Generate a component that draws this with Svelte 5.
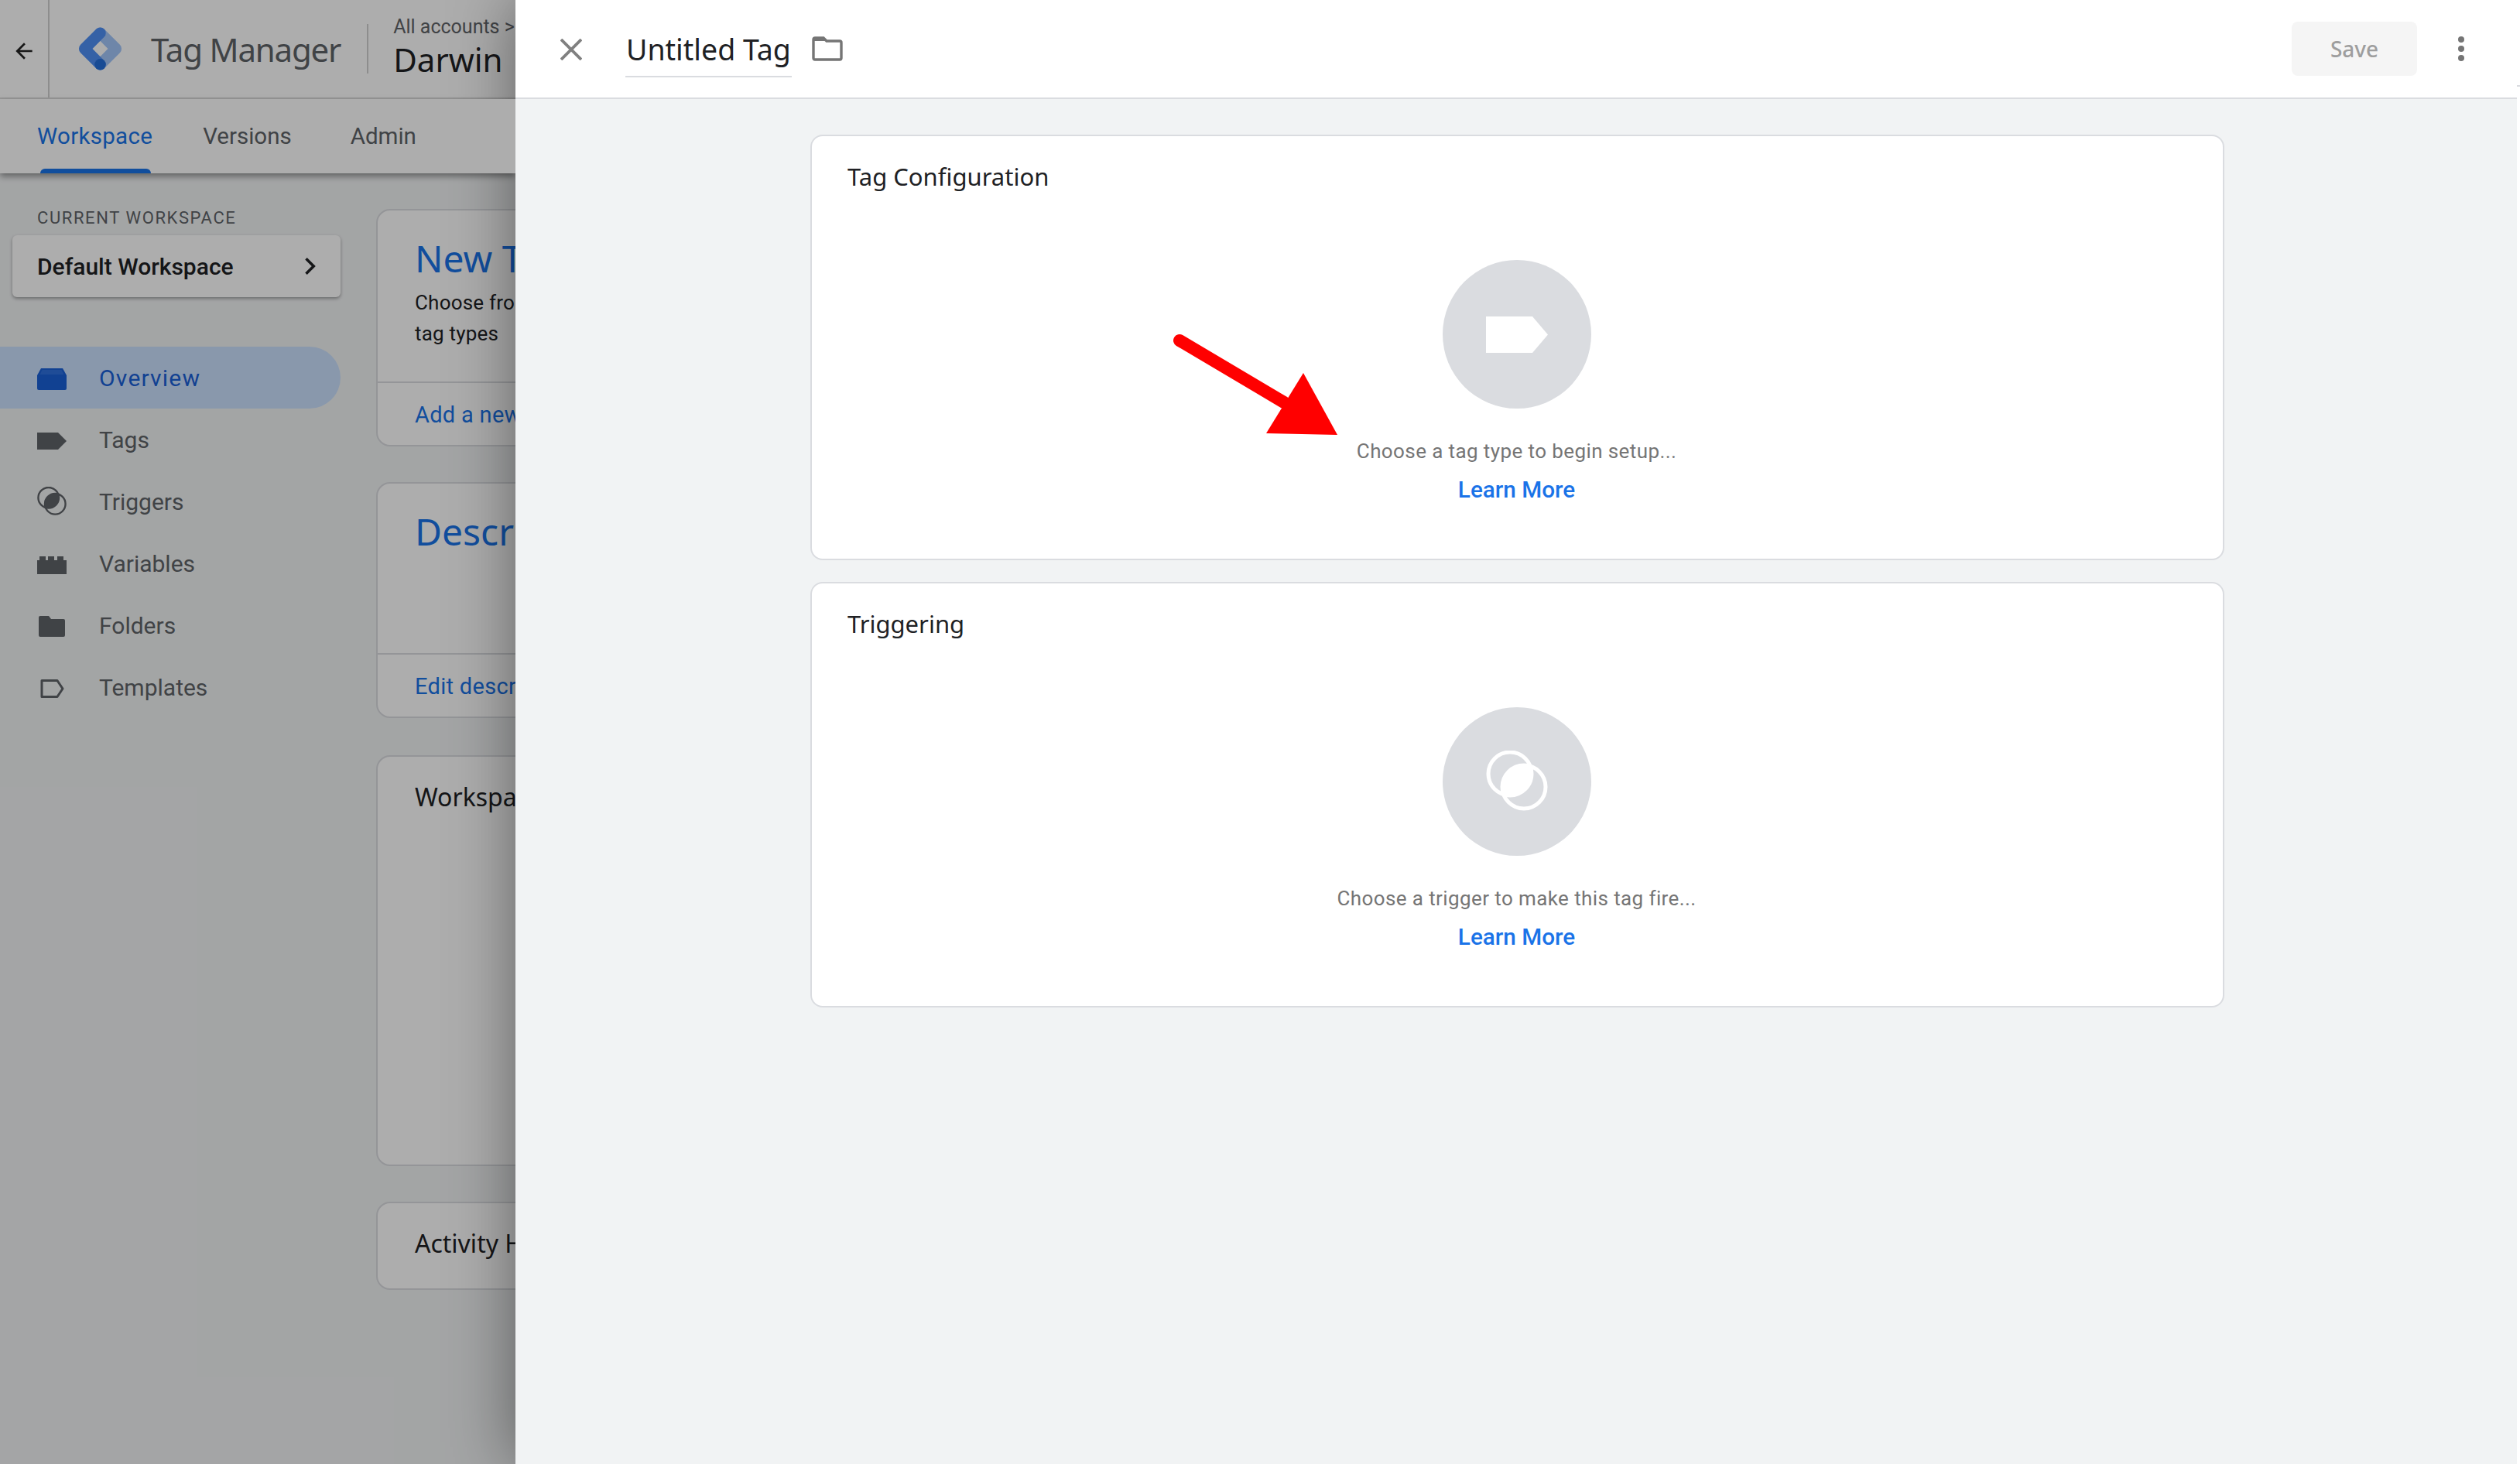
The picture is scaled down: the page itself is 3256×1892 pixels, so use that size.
<script>
	const navItems = [
		{ label: 'Overview', icon: 'overview', active: true },
		{ label: 'Tags', icon: 'tag' },
		{ label: 'Triggers', icon: 'trigger' },
		{ label: 'Variables', icon: 'variable' },
		{ label: 'Folders', icon: 'folder' },
		{ label: 'Templates', icon: 'template' }
	];
</script>

<div class="page">
	<!-- GTM workspace behind the drawer -->
	<div class="workspace">
		<header class="topbar">
			<div class="back">
				<svg viewBox="0 0 24 24" width="32" height="32"><path d="M20 11H7.8l5.6-5.6L12 4l-8 8 8 8 1.4-1.4L7.8 13H20z" fill="#222" /></svg>
			</div>
			<svg class="logo" viewBox="0 0 100 100" width="59" height="58">
				<path d="M50 15 85 50 50 85" fill="none" stroke="#a3c6fa" stroke-width="25" stroke-linejoin="round" stroke-linecap="round" />
				<path d="M50 15 15 50 50 85" fill="none" stroke="#4f8ff5" stroke-width="25" stroke-linejoin="round" stroke-linecap="round" />
				<circle cx="50" cy="85" r="12.5" fill="#246fdb" />
			</svg>
			<span class="product">Tag Manager</span>
			<div class="account">
				<span class="crumb">All accounts &gt;</span>
				<span class="account-name">Darwin<i class="caret"></i></span>
			</div>
		</header>
		<nav class="tabs">
			<span class="tab active">Workspace</span>
			<span class="tab">Versions</span>
			<span class="tab admin">Admin</span>
		</nav>
		<div class="content">
			<aside class="sidebar">
				<div class="wlabel">CURRENT WORKSPACE</div>
				<div class="wselect">
					<span>Default Workspace</span>
					<svg viewBox="0 0 24 24" width="36" height="36"><path d="M9 5.5 15.5 12 9 18.5" fill="none" stroke="#202124" stroke-width="2.4" /></svg>
				</div>
				<ul class="nav">
					{#each navItems as item}
						<li class="nav-item" class:active={item.active}>
							<svg class="nav-icon" viewBox="0 0 38 38" width="38" height="38">
								{#if item.icon === 'overview'}
									<path d="M5 7h28l5 9v17q0 2-2 2H2q-2 0-2-2V16z" fill="#1a60d8" />
									<path d="M6.5 9h25l3 6H3.500z" fill="#4a86e8" opacity=".45" />
								{:else if item.icon === 'tag'}
									<path d="M0 10h27l11 11-11 11H0z" fill="#5f6368" />
								{:else if item.icon === 'trigger'}
									<g transform="scale(.475)">
										<circle cx="31" cy="30" r="28" fill="none" stroke="#5f6368" stroke-width="5" />
										<circle cx="49" cy="47" r="28" fill="none" stroke="#5f6368" stroke-width="5" />
										<path d="M22.800 56.700A28 28 0 0 1 57.200 20.300 28 28 0 0 1 22.800 56.700z" fill="#5f6368" />
									</g>
								{:else if item.icon === 'variable'}
									<path d="M0 33V15h3v-5h8v5h3v-5h8v5h4v-5h8v5h4v18z" fill="#5f6368" />
								{:else if item.icon === 'folder'}
									<path d="M4 7h11l3 4h16q2 0 2 2v19q0 2-2 2H4q-2 0-2-2V9q0-2 2-2z" fill="#5f6368" />
								{:else}
									<path d="M6 10.500h20l7 10.500-7 10.500H6z" fill="none" stroke="#5f6368" stroke-width="3" stroke-linejoin="round" />
								{/if}
							</svg>
							<span>{item.label}</span>
						</li>
					{/each}
				</ul>
			</aside>
			<main class="cards">
				<section class="bg-card new-tag">
					<div class="bg-body">
						<h2 class="bg-title">New Tag</h2>
						<p class="bg-text">Choose from over 50<br />tag types</p>
					</div>
					<div class="bg-foot">Add a new tag</div>
				</section>
				<section class="bg-card description">
					<div class="bg-body">
						<h2 class="bg-title">Description</h2>
					</div>
					<div class="bg-foot">Edit description</div>
				</section>
				<section class="bg-card changes">
					<div class="bg-plain">Workspace Changes</div>
				</section>
				<section class="bg-card activity">
					<div class="bg-plain">Activity History</div>
				</section>
			</main>
		</div>
		<div class="scrim"></div>
	</div>

	<!-- Tag editor drawer -->
	<div class="drawer">
		<header class="drawer-head">
			<svg class="close" viewBox="0 0 28 28" width="28" height="28"><path d="M1 1l26 26M27 1 1 27" stroke="#808080" stroke-width="3.800" /></svg>
			<span class="tag-name">Untitled Tag</span>
			<svg class="folder-btn" viewBox="0 0 40 32" width="40" height="32"><path d="M4 2h11l4 4h17q2 0 2 2v20q0 2-2 2H4q-2 0-2-2V4q0-2 2-2z" fill="none" stroke="#757575" stroke-width="3.400" /><path d="M4 1h11l4 5H2V3z" fill="#757575" /></svg>
			<button class="save" type="button">Save</button>
			<svg class="more" viewBox="0 0 8 32" width="8" height="32"><circle cx="4" cy="4" r="4" fill="#757575" /><circle cx="4" cy="16" r="4" fill="#757575" /><circle cx="4" cy="28" r="4" fill="#757575" /></svg>
		</header>
		<div class="drawer-body">
			<section class="card">
				<h3 class="card-title">Tag Configuration</h3>
				<div class="placeholder">
					<div class="circle">
						<svg viewBox="0 0 80 47" width="80" height="47"><path d="M0 0h60l20 23.500-20 23.500H0z" fill="#fff" /></svg>
					</div>
					<p class="hint">Choose a tag type to begin setup...</p>
					<span class="learn">Learn More</span>
				</div>
				<svg class="arrow" viewBox="0 0 240 150" width="240" height="150">
					<path d="M24 20 L159 100" stroke="#f00" stroke-width="16" stroke-linecap="round" />
					<path d="M184 62 L228 142 L136 140 Z" fill="#f00" />
				</svg>
			</section>
			<section class="card">
				<h3 class="card-title">Triggering</h3>
				<div class="placeholder">
					<div class="circle">
						<svg viewBox="0 0 80 80" width="80" height="80">
							<circle cx="31" cy="30" r="28" fill="none" stroke="#fff" stroke-width="5" />
							<circle cx="49" cy="47" r="28" fill="none" stroke="#fff" stroke-width="5" />
							<path d="M22.800 56.700A28 28 0 0 1 57.200 20.300 28 28 0 0 1 22.800 56.700z" fill="#fff" />
						</svg>
					</div>
					<p class="hint">Choose a trigger to make this tag fire...</p>
					<span class="learn">Learn More</span>
				</div>
			</section>
		</div>
	</div>
	<div class="gutter"></div>
</div>

<style>
	:global(body) {
		margin: 0;
		background: #fff;
	}

	.page {
		display: flex;
		width: 3256px;
		height: 1892px;
		overflow: hidden;
		font-family: Roboto, sans-serif;
	}

	.workspace {
		position: relative;
		flex: 0 0 666px;
		overflow: hidden;
		background: #f1f3f4;
	}

	.scrim {
		position: absolute;
		inset: 0;
		z-index: 2;
		background: rgba(0, 0, 0, 0.32);
	}

	.topbar {
		display: flex;
		align-items: center;
		width: 900px;
		height: 126px;
		background: #fff;
		border-bottom: 2px solid #e0e0e0;
	}

	.back {
		display: flex;
		align-items: center;
		justify-content: center;
		box-sizing: border-box;
		flex: none;
		width: 64px;
		height: 100%;
		padding-top: 6px;
		border-right: 2px solid #d0d0d0;
	}

	.logo {
		margin-left: 36px;
		margin-right: 36px;
		flex: none;
	}

	.product {
		font-family: 'Noto Sans', sans-serif;
		font-size: 42px;
		color: #5f6368;
		letter-spacing: -1.2px;
		padding-right: 34px;
		white-space: nowrap;
	}

	.account {
		display: flex;
		flex-direction: column;
		box-sizing: border-box;
		height: 64px;
		padding-left: 32px;
		border-left: 2px solid #d0d0d0;
	}

	.crumb {
		font-size: 25px;
		color: #5f6368;
		line-height: 26px;
		margin-top: -9px;
		white-space: nowrap;
	}

	.account-name {
		font-family: 'Noto Sans', sans-serif;
		font-size: 42px;
		line-height: 50px;
		margin-top: 4px;
		color: #202124;
		white-space: nowrap;
	}

	.caret {
		display: inline-block;
		margin-left: 16px;
		border: 7px solid transparent;
		border-top-color: #5f6368;
		border-bottom: none;
		vertical-align: middle;
	}

	.tabs {
		position: relative;
		z-index: 1;
		display: flex;
		gap: 65px;
		width: 100%;
		box-sizing: border-box;
		height: 96px;
		padding-left: 48px;
		background: #fff;
		box-shadow: 0 4px 8px rgba(0, 0, 0, 0.4);
	}

	.tab {
		position: relative;
		font-size: 29.5px;
		line-height: 96px;
		color: #5f6368;
	}

	.tab.admin {
		margin-left: 11px;
	}

	.tab.active {
		color: #1a73e8;
		letter-spacing: 0.3px;
	}

	.tab.active::after {
		content: '';
		position: absolute;
		left: 4px;
		right: 2px;
		bottom: 0;
		height: 6px;
		background: #1a73e8;
		border-radius: 6px 6px 0 0;
	}

	.content {
		display: flex;
		width: 1400px;
	}

	.sidebar {
		flex: 0 0 440px;
		padding-top: 46px;
	}

	.wlabel {
		padding-left: 48px;
		font-size: 22px;
		line-height: 24px;
		letter-spacing: 1.6px;
		color: #5f6368;
	}

	.wselect {
		display: flex;
		align-items: center;
		justify-content: space-between;
		box-sizing: border-box;
		height: 80px;
		margin: 10px 0 0 16px;
		padding: 0 22px 0 32px;
		background: #fff;
		border-radius: 6px;
		box-shadow: 0 2px 4px rgba(0, 0, 0, 0.35);
		font-size: 30px;
		font-weight: 500;
		color: #202124;
	}

	.nav {
		list-style: none;
		margin: 64px 0 0;
		padding: 0;
	}

	.nav-item {
		display: flex;
		align-items: center;
		gap: 42px;
		height: 80px;
		padding-left: 48px;
		font-size: 30px;
		color: #5f6368;
		border-radius: 0 40px 40px 0;
	}

	.nav-item.active {
		background: #cbe1fe;
		color: #1a60d8;
		letter-spacing: 1.2px;
	}

	.cards {
		display: flex;
		flex-direction: column;
		margin: 46px 0 0 46px;
		width: 900px;
	}

	.bg-card {
		box-sizing: border-box;
		background: #fff;
		border: 2px solid #dadce0;
		border-radius: 18px;
		display: flex;
		flex-direction: column;
	}

	.new-tag {
		height: 307px;
		margin-bottom: 46px;
	}

	.description {
		height: 305px;
		margin-bottom: 48px;
	}

	.changes {
		height: 531px;
		margin-bottom: 46px;
	}

	.activity {
		height: 114px;
	}

	.bg-body {
		flex: 1;
		padding: 30px 0 0 48px;
	}

	.bg-title {
		margin: 0;
		font-weight: 400;
		font-size: 48px;
		line-height: 64px;
		color: #1a73e8;
		font-family: 'Noto Sans', sans-serif;
	}

	.bg-text {
		margin: 5px 0 0;
		font-size: 26px;
		line-height: 40px;
		letter-spacing: 0.2px;
		color: #202124;
	}

	.bg-foot {
		height: 80px;
		padding-left: 48px;
		border-top: 2px solid #dadce0;
		font-size: 29px;
		line-height: 82px;
		letter-spacing: 0.3px;
		color: #1a73e8;
	}

	.bg-plain {
		padding: 30px 0 0 48px;
		font-size: 32px;
		line-height: 44px;
		color: #202124;
		font-family: 'Noto Sans', sans-serif;
	}

	.drawer {
		position: relative;
		flex: 0 0 2586px;
		display: flex;
		flex-direction: column;
		background: #f1f3f4;
		box-shadow: 0 0 80px rgba(0, 0, 0, 0.44);
	}

	.gutter {
		position: relative;
		flex: 0 0 4px;
		background: #fff;
	}

	.gutter::before {
		content: '';
		display: block;
		margin-top: 110px;
		height: 2px;
		background: #dadce0;
	}

	.drawer-head {
		display: flex;
		align-items: center;
		box-sizing: border-box;
		flex: none;
		height: 128px;
		padding: 0 68px 0 58px;
		background: #fff;
		border-bottom: 2px solid #dadce0;
	}

	.close {
		flex: none;
		margin-top: 1px;
	}

	.tag-name {
		margin-left: 56px;
		padding: 2px 1px 8px;
		border-bottom: 2px solid #dadce0;
		margin-top: 10px;
		font-family: 'Noto Sans', sans-serif;
		font-size: 37.5px;
		line-height: 52px;
		color: #202124;
	}

	.folder-btn {
		margin-left: 26px;
		flex: none;
	}

	.save {
		margin-left: auto;
		width: 162px;
		height: 70px;
		border: none;
		border-radius: 8px;
		background: #f5f5f5;
		font-family: 'Noto Sans', sans-serif;
		font-size: 28px;
		font-weight: 500;
		color: #9e9e9e;
	}

	.more {
		flex: none;
		margin-left: 53px;
	}

	.drawer-body {
		flex: 1;
		display: flex;
		flex-direction: column;
		gap: 28px;
		padding: 46px 0 0 381px;
	}

	.card {
		position: relative;
		box-sizing: border-box;
		width: 1827px;
		height: 550px;
		background: #fff;
		border: 2px solid #dadce0;
		border-radius: 16px;
	}

	.card-title {
		margin: 0;
		padding: 30px 0 0 46px;
		font-family: 'Noto Sans', sans-serif;
		font-size: 31px;
		font-weight: 400;
		line-height: 44px;
		color: #202124;
	}

	.placeholder {
		display: flex;
		flex-direction: column;
		align-items: center;
		margin: 86px 2px 0 0;
	}

	.circle {
		display: flex;
		align-items: center;
		justify-content: center;
		width: 192px;
		height: 192px;
		border-radius: 50%;
		background: #dadce0;
	}

	.hint {
		margin: 38px 0 0;
		font-size: 26px;
		line-height: 34px;
		letter-spacing: 0.4px;
		color: #757575;
	}

	.learn {
		margin-top: 15px;
		font-size: 29.7px;
		font-weight: 500;
		line-height: 36px;
		color: #1a73e8;
	}

	.arrow {
		position: absolute;
		left: 451px;
		top: 244px;
	}
</style>
